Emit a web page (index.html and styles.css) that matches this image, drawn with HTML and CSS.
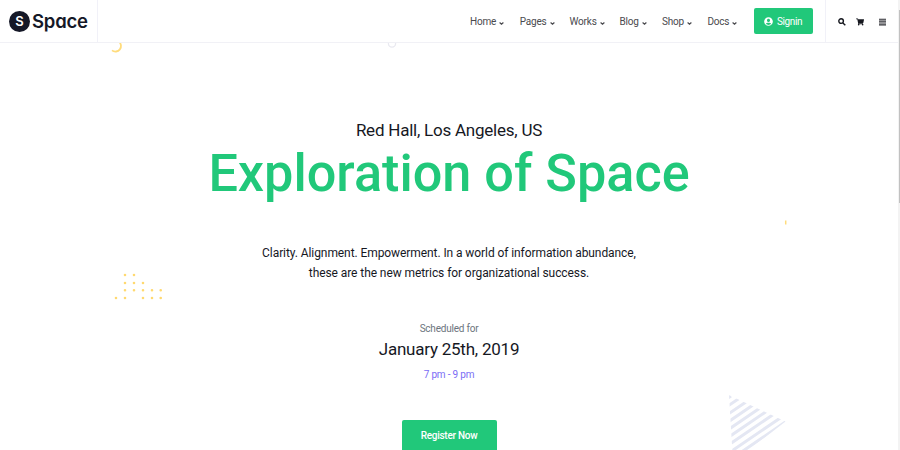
FILE: index.html
```html
<!DOCTYPE html>
<html lang="en">
<head>
<meta charset="utf-8">
<title>Space</title>
<link rel="stylesheet" href="styles.css">
</head>
<body>
<header class="header">
  <a class="brand">
    <span class="brand-mark">S</span><span class="brand-name">Space</span>
  </a>
  <nav class="nav">
    <a class="item">Home<svg viewBox="0 0 5 3"><path d="M.6.5 2.5 2.2 4.4.5"/></svg></a>
    <a class="item">Pages<svg viewBox="0 0 5 3"><path d="M.6.5 2.5 2.2 4.4.5"/></svg></a>
    <a class="item">Works<svg viewBox="0 0 5 3"><path d="M.6.5 2.5 2.2 4.4.5"/></svg></a>
    <a class="item item-blog">Blog<svg viewBox="0 0 5 3"><path d="M.6.5 2.5 2.2 4.4.5"/></svg></a>
    <a class="item item-shop">Shop<svg viewBox="0 0 5 3"><path d="M.6.5 2.5 2.2 4.4.5"/></svg></a>
    <a class="item item-docs">Docs<svg viewBox="0 0 5 3"><path d="M.6.5 2.5 2.2 4.4.5"/></svg></a>
  </nav>
  <a class="signin">
    <svg viewBox="0 0 496 512"><path d="M248 8C111 8 0 119 0 256s111 248 248 248 248-111 248-248S385 8 248 8zm0 96c48.600 0 88 39.400 88 88s-39.400 88-88 88-88-39.400-88-88 39.400-88 88-88zm0 344c-58.700 0-111.300-26.600-146.500-68.200 18.800-35.400 55.600-59.800 98.500-59.800 2.400 0 4.800.4 7.100 1.100 13 4.200 26.600 6.900 40.900 6.900s28-2.700 40.900-6.900c2.300-.7 4.700-1.100 7.100-1.100 42.900 0 79.700 24.400 98.500 59.800C359.300 421.400 306.700 448 248 448z"/></svg>Signin
  </a>
  <div class="tools">
    <svg class="search" viewBox="0 0 8 8"><circle cx="3.100" cy="3.100" r="2.300"/><path d="M4.900 4.900 7.300 7.300"/></svg>
    <svg class="cart" viewBox="0 0 576 512"><path d="M528.100 301.300l47.300-208C578.800 78.300 567.400 64 552 64H159.200l-9.200-44.800C147.800 8 137.900 0 126.500 0H24C10.700 0 0 10.700 0 24v16c0 13.300 10.700 24 24 24h69.900l70.200 343.400C147.300 417.100 136 435.200 136 456c0 30.900 25.100 56 56 56s56-25.100 56-56c0-15.700-6.400-29.800-16.800-40h209.600C430.400 426.200 424 440.300 424 456c0 30.900 25.100 56 56 56s56-25.100 56-56c0-22.200-12.900-41.300-31.600-50.400l5.500-24.300c3.400-15-8-29.300-23.400-29.300H218.100l-6.500-32h293.100c11.200 0 20.900-7.800 23.400-18.700z"/></svg>
    <svg class="menu" viewBox="0 0 7 8"><path d="M0 1.200h7M0 3.100h7M0 5h7M0 6.900h7"/></svg>
  </div>
</header>
<main class="hero">
  <p class="place">Red Hall, Los Angeles, US</p>
  <h1 class="title">Exploration of Space</h1>
  <p class="lead">Clarity. Alignment. Empowerment. In a world of information abundance,<br>these are the new metrics for organizational success.</p>
  <p class="label">Scheduled for</p>
  <p class="date">January 25th, 2019</p>
  <p class="time">7 pm - 9 pm</p>
  <a class="register">Register Now</a>
</main>
<svg class="decor" viewBox="0 0 900 450">
  <path class="arc" d="M118.800 41.500a4.900 4.900 0 0 1-6.800 8.900"/>
  <circle class="ring" cx="392" cy="43.500" r="3.600"/>
  <path class="tick" d="M785.700 220.500v4"/>
  <g class="dots">
    <path d="M125 275h.01M134 275h.01M125 283h.01M134 283h.01M143 283h.01M125 290.300h.01M134 290.300h.01M143 290.300h.01M152 290.300h.01M160.700 290.300h.01M116 298h.01M125 298h.01M143 298h.01M152 298h.01M160.700 298h.01"/>
  </g>
  <clipPath id="tri"><path d="M729 395 785.500 421.500 733 462z"/></clipPath>
  <path class="stripes" clip-path="url(#tri)" d="M731 396l-10 6.700M739 398.500l-20 13.500M746 402l-30 20.400M753 405l-30 20.400M760 408l-40 27.200M767 411l-50 34M774 414l-60 40.800M781 417.500l-60 40.800M787 421l-65 44.200"/>
</svg>
<div class="scrollbar"><div class="thumb"></div></div>
</body>
</html>
```

FILE: styles.css
```css
* { box-sizing: border-box; }
body {
  margin: 0;
  height: 450px;
  overflow: hidden;
  position: relative;
  background: #fff;
  color: #16181f;
  font-family: Roboto, "Liberation Sans", sans-serif;
}
p, h1 { margin: 0; font-weight: 400; }
.header {
  position: relative;
  z-index: 1;
  display: flex;
  align-items: center;
  height: 43px;
  padding-right: 1px;
  background: #fff;
  border-bottom: 1px solid #f1f1f6;
}
.brand {
  display: flex;
  align-items: center;
  width: 98px;
  height: 42px;
  padding-left: 9px;
  border-right: 1px solid #f1f1f8;
  color: #151827;
}
.brand-mark {
  width: 21px;
  height: 21px;
  border-radius: 50%;
  background: #151827;
  color: #fff;
  font: 600 13px/21px Inter, sans-serif;
  text-align: center;
}
.brand-name {
  margin: 0 0 0 2px;
  font: 600 18.500px/24px Inter, sans-serif;
  font-feature-settings: "cv11";
  letter-spacing: -0.200px;
}
.nav {
  display: flex;
  width: 284px;
  margin: 1px 0 0 372px;
  color: #4a4a4e;
  font-size: 10px;
  letter-spacing: -0.200px;
  line-height: 15px;
}
.item { display: flex; align-items: center; width: 49.800px; }
.item-blog { width: 42.500px; }
.item-shop { width: 45.500px; }
.item-docs { width: 46px; }
.item svg {
  width: 5px;
  height: 3px;
  margin: 3px 0 0 3px;
  fill: none;
  stroke: #4a4a4e;
  stroke-width: 1.200;
}
.signin {
  display: flex;
  align-items: center;
  justify-content: center;
  gap: 4px;
  width: 59px;
  height: 26px;
  padding-right: 1px;
  border-radius: 2px;
  background: #21c87a;
  color: #fff;
  font-size: 10px;
  letter-spacing: -0.400px;
}
.signin svg { width: 9px; height: 9px; fill: #fff; }
.tools {
  display: flex;
  align-items: center;
  height: 42px;
  margin-left: 12px;
  padding: 2px 0 0 12px;
  border-left: 1px solid #f1f1f8;
}
.search { width: 8px; height: 8px; fill: none; stroke: #16181f; stroke-width: 1.400; }
.cart { width: 8px; height: 8px; margin-left: 10px; fill: #16181f; }
.menu { width: 7px; height: 8px; margin-left: 15px; stroke: #2a2b30; stroke-width: 1.100; }
.hero {
  display: flex;
  flex-direction: column;
  align-items: center;
  padding: 76px 2px 0 0;
  text-align: center;
}
.place { font-size: 17px; letter-spacing: -0.230px; line-height: 22px; }
.title { margin-top: 2px; color: #21c87a; font-size: 52.200px; font-weight: 500; line-height: 62px; }
.lead { margin-top: 38px; font-size: 12px; letter-spacing: -0.080px; line-height: 20px; }
.label { margin-top: 39px; color: #6c757d; font-size: 10px; letter-spacing: -0.220px; line-height: 13px; }
.date { margin-top: 3px; font-size: 17px; letter-spacing: -0.230px; line-height: 23px; }
.time { margin-top: 6px; color: #7a6cf5; font-size: 10px; letter-spacing: -0.180px; line-height: 15px; }
.register {
  width: 95px;
  height: 32px;
  margin-top: 38px;
  border-radius: 2px;
  background: #21c87a;
  color: #fff;
  font-size: 10px;
  font-weight: 500;
  letter-spacing: -0.270px;
  line-height: 32px;
}
.decor { position: absolute; top: 0; left: 0; width: 900px; height: 450px; fill: none; pointer-events: none; }
.arc { stroke: #ffdc7c; stroke-width: 1.800; }
.ring { stroke: #e9e9f0; stroke-width: 1.300; }
.tick { stroke: #ffdc7c; stroke-width: 1.500; }
.dots { stroke: #ffd970; stroke-width: 2.600; stroke-linecap: round; }
.stripes { stroke: #e4e7f3; stroke-width: 3; }
.scrollbar { position: absolute; z-index: 2; top: 0; right: 0; width: 2px; height: 450px; padding-top: 10px; background: #f3f3f3; }
.thumb { height: 193px; margin-left: 1px; background: #c1c1c1; }
```
